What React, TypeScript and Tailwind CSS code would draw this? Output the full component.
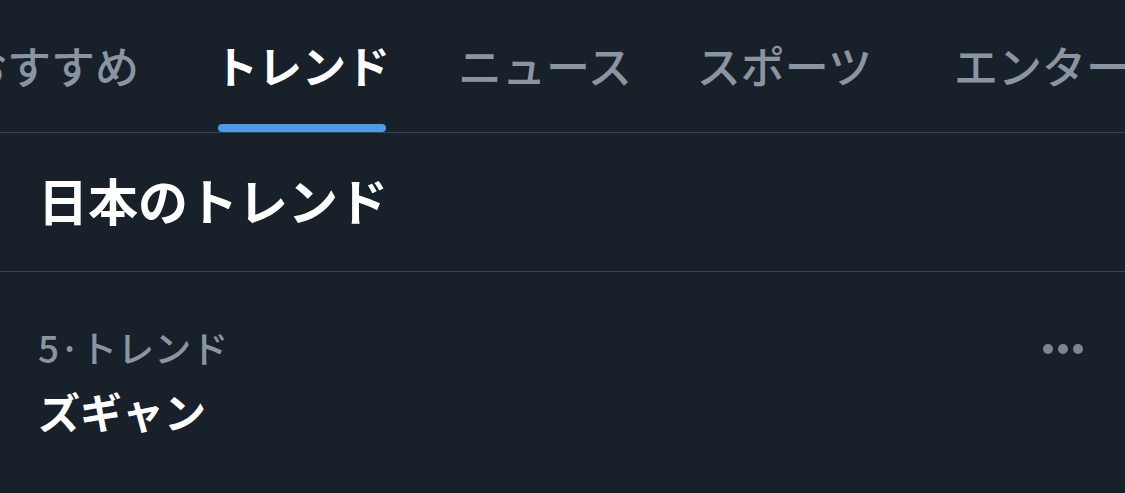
import React from "react";

const tabs = [
  { label: "おすすめ", ml: "ml-[-37px]", active: false },
  { label: "トレンド", ml: "ml-[75px]", active: true },
  { label: "ニュース", ml: "ml-[68px]", active: false },
  { label: "スポーツ", ml: "ml-[65px]", active: false },
  { label: "エンター", ml: "ml-[82px]", active: false },
];

const font = { fontFamily: '"Noto Sans CJK JP", "Noto Sans", sans-serif' };

export default function App() {
  return (
    <div className="w-[1125px] h-[493px] overflow-hidden bg-[#18202a]" style={font}>
      {/* Tabs */}
      <div className="h-[133px] flex border-b border-[#3a424d] whitespace-nowrap">
        {tabs.map((t) => (
          <div key={t.label} className={`${t.ml} shrink-0 h-full flex flex-col items-center`}>
            <span
              className={`pt-[43px] text-[44px] leading-none ${
                t.active ? "text-white font-bold" : "text-[#8b95a1] font-medium"
              }`}
            >
              {t.label}
            </span>
            {t.active && <div className="mt-auto w-[168px] h-[8px] rounded-full bg-[#4c9be8]" />}
          </div>
        ))}
      </div>

      {/* Section header */}
      <div className="h-[139px] border-b border-[#3a424d] pl-[38px]">
        <h1 className="pt-[41px] text-[50px] leading-none font-bold text-white">日本のトレンド</h1>
      </div>

      {/* Trend item */}
      <div className="flex items-start justify-between pl-[38px] pr-[37px] pt-[57px]">
        <div>
          <div className="text-[37px] leading-none font-medium text-[#8b95a1]">5·トレンド</div>
          <div className="mt-[24px] text-[42px] leading-none font-bold text-white">ズギャン</div>
        </div>
        <svg width="46" height="12" viewBox="0 0 46 12" className="mt-[14px]">
          <circle cx="6" cy="6" r="5" fill="#7d8792" />
          <circle cx="21" cy="6" r="5" fill="#7d8792" />
          <circle cx="36" cy="6" r="5" fill="#7d8792" />
        </svg>
      </div>
    </div>
  );
}
